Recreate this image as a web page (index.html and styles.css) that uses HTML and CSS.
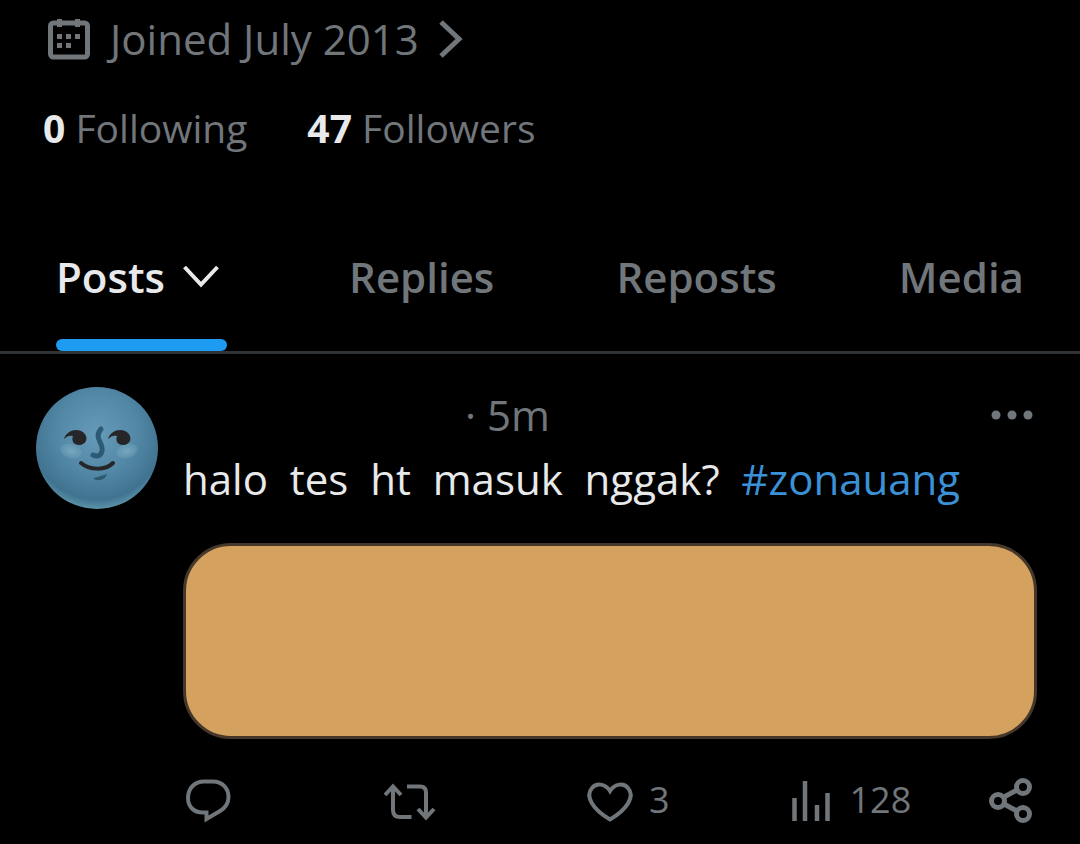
FILE: index.html
```html
<!DOCTYPE html>
<html lang="id">
<head>
    <meta charset="UTF-8">
    <meta name="viewport" content="width=device-width, initial-scale=1.0">
    <title>Profile</title>
    <link rel="stylesheet" href="styles.css">
</head>
<body>
    <header class="profile">
        <a class="joined" href="#">
            <svg class="calendar-icon" viewBox="0 0 42 42" aria-hidden="true">
                <rect x="2.5" y="5" width="37" height="34" rx="3" fill="none" stroke="currentColor" stroke-width="5"/>
                <path d="M9 1h5v8H9zM27 1h5v8h-5zM9 16h5v5H9zM18 16h5v5h-5zM27 16h5v5h-5zM9 25h5v5H9zM18 25h5v5h-5z" fill="currentColor"/>
            </svg>
            <span>Joined July 2013</span>
            <svg class="arrow-icon" viewBox="0 0 24 38" aria-hidden="true">
                <path d="M2 2l18 17L2 36" fill="none" stroke="currentColor" stroke-width="5"/>
            </svg>
        </a>
        <div class="stats">
            <a href="#"><strong>0</strong> Following</a>
            <a href="#"><strong>47</strong> Followers</a>
        </div>
    </header>

    <nav class="tabs">
        <button class="tab active">
            Posts
            <svg class="chevron-icon" viewBox="0 0 36 24" aria-hidden="true">
                <path d="M1.500 2L18 19.500 34.500 2" fill="none" stroke="currentColor" stroke-width="4"/>
            </svg>
        </button>
        <button class="tab">Replies</button>
        <button class="tab">Reposts</button>
        <button class="tab">Media</button>
    </nav>

    <main>
        <article class="post">
            <svg class="avatar" viewBox="0 0 122 122" role="img" aria-label="Avatar">
                <defs>
                    <radialGradient id="moon" cx="50%" cy="38%" r="64%">
                        <stop offset="0" stop-color="#659bb9"/>
                        <stop offset="0.5" stop-color="#5389a7"/>
                        <stop offset="0.85" stop-color="#407390"/>
                        <stop offset="1" stop-color="#649caf"/>
                    </radialGradient>
                    <radialGradient id="cheek">
                        <stop offset="0" stop-color="#87b4c8" stop-opacity="0.7"/>
                        <stop offset="1" stop-color="#78a6bd" stop-opacity="0.3"/>
                    </radialGradient>
                </defs>
                <circle cx="61" cy="61" r="61" fill="url(#moon)"/>
                <ellipse cx="35" cy="64" rx="11" ry="7" transform="rotate(15 35 64)" fill="url(#cheek)"/>
                <ellipse cx="91" cy="64" rx="11" ry="7" transform="rotate(-15 91 64)" fill="url(#cheek)"/>
                <g fill="#262629">
                    <path id="eye" d="M28 52C31 42 43 41 48 46C53 51 50 58 43 58C38 58 35 54 37 49C34 48 31 49 28 52z"/>
                    <use href="#eye" x="44"/>
                </g>
                <path d="M65 42C57 51 68 56 66 64C65 69 61 70 57 68" fill="none" stroke="#2c5a73" stroke-width="5" stroke-linecap="round"/>
                <path d="M45 76C53 83 69 84 77 76" fill="none" stroke="#262629" stroke-width="4" stroke-linecap="round"/>
                <path d="M58 91C63 90 67 88 71 87C70 92 63 95 58 92z" fill="#2c5a73"/>
            </svg>
            <div class="content">
                <div class="post-header">
                    <span class="time">· 5m</span>
                    <button class="more" aria-label="More">
                        <svg class="more-icon" viewBox="0 0 42 10" aria-hidden="true">
                            <g fill="currentColor">
                                <circle cx="5" cy="5" r="4.500"/>
                                <circle cx="21" cy="5" r="4.500"/>
                                <circle cx="37" cy="5" r="4.500"/>
                            </g>
                        </svg>
                    </button>
                </div>
                <p class="text">halo  tes  ht  masuk  nggak?  <a href="#">#zonauang</a></p>
                <div class="media"></div>
                <div class="actions">
                    <button class="action" aria-label="Reply">
                        <svg viewBox="0 0 52 52" aria-hidden="true">
                            <path d="M23.500 38.500H20C10 38.500 5 32 5 24C5 14 12 7.500 21 7.500H30C39 7.500 45.500 14 45.500 23C45.500 30 42 34 37 37L23.500 45z" fill="none" stroke="currentColor" stroke-width="4"/>
                        </svg>
                    </button>
                    <button class="action" aria-label="Repost">
                        <svg viewBox="0 0 52 52" aria-hidden="true">
                            <path d="M1 21L9 12.500L17 21M9 14V36Q9 43 16 43H27.500M23 12.500H36Q42 12.500 42 18.500V41M34 35L42 43.500L50 35" fill="none" stroke="currentColor" stroke-width="4"/>
                        </svg>
                    </button>
                    <button class="action" aria-label="Like">
                        <svg viewBox="0 0 52 52" aria-hidden="true">
                            <path d="M26 17C21 9 12 9 8 14C1 22 8 35 26 45.500C44 35 51 22 44 14C40 9 31 9 26 17z" fill="none" stroke="currentColor" stroke-width="4"/>
                        </svg>
                        3
                    </button>
                    <button class="action" aria-label="Views">
                        <svg viewBox="0 0 52 52" aria-hidden="true">
                            <path d="M9.500 24V47M20 7V47M32 31V47M42.500 19V47" fill="none" stroke="currentColor" stroke-width="4.500"/>
                        </svg>
                        128
                    </button>
                    <button class="action" aria-label="Share">
                        <svg viewBox="0 0 52 52" aria-hidden="true">
                            <g fill="none" stroke="currentColor" stroke-width="5">
                                <circle cx="13" cy="27" r="6.500"/>
                                <circle cx="38" cy="13" r="6.500"/>
                                <circle cx="38" cy="40" r="6.500"/>
                                <path d="M19 23L32 16M19 30L32 37"/>
                            </g>
                        </svg>
                    </button>
                </div>
            </div>
        </article>
    </main>
</body>
</html>
```
FILE: styles.css
```css
* {
    box-sizing: border-box;
}

body {
    margin: 0;
    background-color: #000000;
    color: #e7e9ea;
    font-family: "Open Sans", "Noto Sans", sans-serif;
    font-size: 42px;
    line-height: 56px;
}

a {
    color: inherit;
    text-decoration: none;
}

button {
    padding: 0;
    border: none;
    background: none;
    color: inherit;
    font: inherit;
    cursor: pointer;
}

svg {
    display: block;
    flex-shrink: 0;
}

.profile {
    padding: 11px 43px 0;
    color: #71767b;
}

.joined {
    display: flex;
    align-items: center;
    padding-left: 5px;
}

.calendar-icon {
    width: 42px;
    height: 42px;
    margin-right: 20px;
}

.arrow-icon {
    width: 24px;
    height: 38px;
    margin-left: 20px;
}

.stats {
    display: flex;
    gap: 60px;
    margin-top: 33px;
    font-size: 39px;
}

.stats strong {
    color: #e7e9ea;
}

/* Tabs */
.tabs {
    display: flex;
    justify-content: space-between;
    margin-top: 83px;
    padding: 0 56px;
    border-bottom: 3px solid #2f3336;
    color: #71767b;
    font-weight: 600;
}

.tab {
    display: flex;
    align-items: center;
    padding: 10px 0 34px;
    border-bottom: 12px solid transparent;
}

.tab.active {
    position: relative;
    gap: 18px;
    padding-right: 8px;
    color: #e7e9ea;
}

.tab.active::after {
    content: "";
    position: absolute;
    left: 0;
    right: 0;
    bottom: -12px;
    height: 12px;
    border-radius: 6px;
    background-color: #1d9bf0;
}

.chevron-icon {
    width: 36px;
    height: 24px;
}

/* Post */
.post {
    display: flex;
    gap: 25px;
    padding: 33px 43px 16px 36px;
}

.avatar {
    width: 122px;
    height: 122px;
}

.content {
    flex: 1;
}

.post-header {
    display: flex;
    justify-content: space-between;
    align-items: center;
    padding-right: 4px;
    color: #71767b;
}

/* room for the display name and handle */
.time {
    padding-left: 282px;
}

.more-icon {
    width: 42px;
    height: 10px;
}

.text {
    margin: 8px 0 36px;
    white-space: pre-wrap;
}

.text a {
    color: #3a91d5;
}

.media {
    height: 196px;
    border: 3px solid #45372a;
    border-radius: 48px;
    background-color: #d5a15f;
}

.actions {
    display: flex;
    margin-top: 33px;
    color: #71767b;
    font-size: 36px;
}

.action {
    display: flex;
    flex: 1;
    align-items: center;
    gap: 13px;
}

.action:last-child {
    flex: none;
}

.action svg {
    width: 52px;
    height: 52px;
}
```
